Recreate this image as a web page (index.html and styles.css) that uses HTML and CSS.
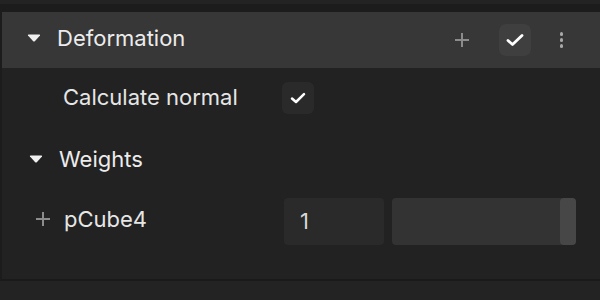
FILE: index.html
```html
<!DOCTYPE html>
<html lang="en">
  <head>
    <meta charset="UTF-8" />
    <title>Deformation</title>
    <link rel="stylesheet" href="styles.css">
  </head>
  <body>
    <div class="topStrip"></div>

    <div class="panel">
      <div class="header">
        <svg class="caret" width="14" height="8" viewBox="0 0 14 8">
          <path d="M1 1.5 Q0.5 0.5 1.8 0.5 H12.2 Q13.5 0.5 13 1.5 L7.8 7.2 Q7 8 6.2 7.2 Z" fill="#f0f0f0" />
        </svg>
        <span class="title">Deformation</span>
        <span class="spacer"></span>
        <svg class="plus" width="16" height="16" viewBox="0 0 16 16">
          <path d="M8 1 V15 M1 8 H15" stroke="#8c8c8c" stroke-width="2" />
        </svg>
        <span class="checkBtn">
          <svg width="18" height="14" viewBox="0 0 18 14">
            <path d="M2 7.5 L6.5 11.5 L16 2.5" stroke="#ffffff" stroke-width="2.8" fill="none" stroke-linecap="round" stroke-linejoin="round" />
          </svg>
        </span>
        <span class="kebab">
          <i></i><i></i><i></i>
        </span>
      </div>

      <div class="row calcRow">
        <span class="label">Calculate normal</span>
        <span class="checkBox">
          <svg width="16" height="12" viewBox="0 0 16 12">
            <path d="M2 6.5 L6 10 L14 2.2" stroke="#ffffff" stroke-width="2.5" fill="none" stroke-linecap="round" stroke-linejoin="round" />
          </svg>
        </span>
      </div>

      <div class="row weightsRow">
        <svg class="caret" width="14" height="8" viewBox="0 0 14 8">
          <path d="M1 1.5 Q0.5 0.5 1.8 0.5 H12.2 Q13.5 0.5 13 1.5 L7.8 7.2 Q7 8 6.2 7.2 Z" fill="#f0f0f0" />
        </svg>
        <span class="title">Weights</span>
      </div>

      <div class="row cubeRow">
        <svg class="smallPlus" width="14" height="14" viewBox="0 0 14 14">
          <path d="M7 0 V14 M0 7 H14" stroke="#8c8c8c" stroke-width="2" />
        </svg>
        <span class="cubeName">pCube4</span>
        <span class="numField">1</span>
        <span class="slider"><span class="thumb"></span></span>
      </div>
    </div>

    <div class="bottomStrip"></div>
  </body>
</html>
```

FILE: styles.css
```css
body {
  margin: 0;
  width: 600px;
  height: 300px;
  overflow: hidden;
  background: #232323;
  font-family: Inter, "Noto Sans", sans-serif;
  color: #e8e8e8;
}

.topStrip {
  height: 4px;
  background: #232323;
  border-bottom: 8px solid #1c1c1c;
}

.panel {
  height: 267px;
  background: #222222;
  border-left: 2px solid #1c1c1c;
  border-bottom: 2px solid #1a1a1a;
}

.header {
  display: flex;
  align-items: center;
  height: 56px;
  background: #373737;
  padding-left: 25px;
  padding-right: 37px;
}

.header .caret {
  margin-top: -4px;
}

.header .title {
  margin-top: -5px;
}

.caret {
  display: block;
}

.title {
  font-size: 22px;
  margin-left: 16px;
  color: #ececec;
}

.spacer {
  flex: 1;
}

.plus {
  display: block;
  margin-right: 29px;
}

.checkBtn {
  display: flex;
  align-items: center;
  justify-content: center;
  width: 32px;
  height: 32px;
  border-radius: 7px;
  background: #3f3f3f;
}

.kebab {
  display: flex;
  flex-direction: column;
  gap: 2.5px;
  margin-left: 29px;
}

.kebab i {
  display: block;
  width: 3.5px;
  height: 3.5px;
  border-radius: 50%;
  background: #a8a8a8;
}

.row {
  display: flex;
  align-items: center;
}

.calcRow {
  height: 60px;
  padding-left: 61px;
}

.label {
  font-size: 22px;
  width: 219px;
  margin-top: -3px;
  color: #e6e6e6;
}

.checkBox {
  display: flex;
  align-items: center;
  justify-content: center;
  width: 32px;
  height: 32px;
  border-radius: 6px;
  background: #2a2a2a;
}

.weightsRow {
  height: 62px;
  padding-left: 27px;
}

.cubeRow {
  height: 62px;
  padding-left: 34px;
}

.smallPlus {
  display: block;
  margin-top: -4px;
}

.cubeName {
  font-size: 22px;
  margin-left: 14px;
  margin-top: -5px;
  width: 220px;
  color: #e6e6e6;
}

.numField {
  width: 84px;
  height: 47px;
  line-height: 47px;
  padding-left: 16px;
  border-radius: 4px;
  background: #2a2a2a;
  font-size: 22px;
  color: #d6d6d6;
}

.slider {
  display: flex;
  justify-content: flex-end;
  width: 184px;
  height: 47px;
  margin-left: 8px;
  border-radius: 4px;
  background: #333333;
}

.thumb {
  width: 16px;
  height: 47px;
  border-radius: 4px;
  background: #474747;
}

.bottomStrip {
  height: 20px;
  background: #232323;
}
```
